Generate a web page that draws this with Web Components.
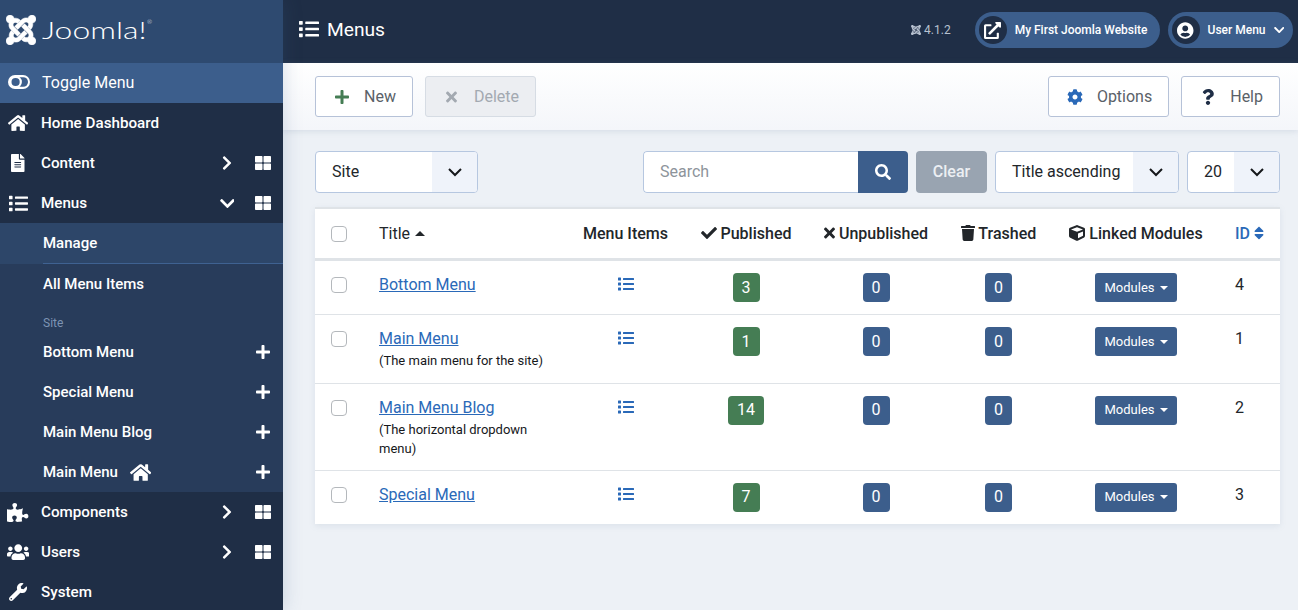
<!DOCTYPE html>
<html lang="en">
<head>
<meta charset="utf-8">
<title>Menus</title>
<style>
  html, body { margin: 0; height: 610px; overflow: hidden; background: #edf1f6; font-family: Roboto, "Liberation Sans", sans-serif; }
</style>
</head>
<body>
<admin-page></admin-page>

<script>
const ICONS = {
  list: [512, 'M80 368H16a16 16 0 0 0-16 16v64a16 16 0 0 0 16 16h64a16 16 0 0 0 16-16v-64a16 16 0 0 0-16-16zm0-320H16A16 16 0 0 0 0 64v64a16 16 0 0 0 16 16h64a16 16 0 0 0 16-16V64a16 16 0 0 0-16-16zm0 160H16a16 16 0 0 0-16 16v64a16 16 0 0 0 16 16h64a16 16 0 0 0 16-16v-64a16 16 0 0 0-16-16zm416 176H176a16 16 0 0 0-16 16v32a16 16 0 0 0 16 16h320a16 16 0 0 0 16-16v-32a16 16 0 0 0-16-16zm0-320H176a16 16 0 0 0-16 16v32a16 16 0 0 0 16 16h320a16 16 0 0 0 16-16V80a16 16 0 0 0-16-16zm0 160H176a16 16 0 0 0-16 16v32a16 16 0 0 0 16 16h320a16 16 0 0 0 16-16v-32a16 16 0 0 0-16-16z'],
  home: [576, 'M280.37 148.26L96 300.11V464a16 16 0 0 0 16 16l112.06-.29a16 16 0 0 0 15.92-16V368a16 16 0 0 1 16-16h64a16 16 0 0 1 16 16v95.64a16 16 0 0 0 16 16.05L464 480a16 16 0 0 0 16-16V300L295.67 148.26a12.19 12.19 0 0 0-15.3 0zM571.6 251.47L488 182.56V44.05a12 12 0 0 0-12-12h-56a12 12 0 0 0-12 12v72.61L318.47 43a48 48 0 0 0-61 0L4.34 251.47a12 12 0 0 0-1.6 16.9l25.5 31A12 12 0 0 0 45.15 301l235.22-193.74a12.19 12.19 0 0 1 15.3 0L530.9 301a12 12 0 0 0 16.9-1.6l25.5-31a12 12 0 0 0-1.7-16.93z'],
  file: [384, 'M224 136V0H24C10.7 0 0 10.7 0 24v464c0 13.3 10.7 24 24 24h336c13.3 0 24-10.7 24-24V160H248c-13.2 0-24-10.8-24-24zm64 236c0 6.6-5.4 12-12 12H108c-6.6 0-12-5.4-12-12v-8c0-6.6 5.4-12 12-12h168c6.6 0 12 5.4 12 12v8zm0-64c0 6.6-5.4 12-12 12H108c-6.6 0-12-5.4-12-12v-8c0-6.6 5.4-12 12-12h168c6.6 0 12 5.4 12 12v8zm0-72v8c0 6.6-5.4 12-12 12H108c-6.6 0-12-5.4-12-12v-8c0-6.6 5.4-12 12-12h168c6.6 0 12 5.4 12 12zm96-114.1v6.1H256V0h6.1c6.4 0 12.5 2.5 17 7l97.9 98c4.5 4.5 7 10.6 7 16.9z'],
  puzzle: [576, 'M519.442 288.651c-41.519 0-59.5 31.593-82.058 31.593C377.409 320.244 432 144 432 144s-196.288 80-196.288-3.297c0-35.827 36.288-46.25 36.288-85.985C272 19.216 243.885 0 210.539 0c-34.654 0-66.366 18.891-66.366 56.346 0 41.364 31.711 59.277 31.711 81.75C175.885 207.719 0 166.758 0 166.758v333.237s178.635 41.047 178.635-28.662c0-22.473-40-40.107-40-81.471 0-37.456 29.25-56.346 63.577-56.346 33.673 0 61.788 19.216 61.788 54.717 0 39.735-36.288 50.158-36.288 85.985 0 60.803 129.675 25.73 181.23 25.73 0 0-34.725-120.101 25.827-120.101 35.962 0 46.423 36.152 86.308 36.152C556.712 416 576 387.99 576 354.443c0-34.199-18.962-65.792-56.558-65.792z'],
  users: [640, 'M96 224c35.3 0 64-28.7 64-64s-28.7-64-64-64-64 28.7-64 64 28.7 64 64 64zm448 0c35.3 0 64-28.7 64-64s-28.7-64-64-64-64 28.7-64 64 28.7 64 64 64zm32 32h-64c-17.6 0-33.5 7.1-45.1 18.6 40.3 22.1 68.9 62 75.1 109.4h66c17.7 0 32-14.3 32-32v-32c0-35.3-28.7-64-64-64zm-256 0c61.9 0 112-50.1 112-112S381.9 32 320 32 208 82.1 208 144s50.1 112 112 112zm76.8 32h-8.3c-20.8 10-43.9 16-68.5 16s-47.6-6-68.5-16h-8.3C179.6 288 128 339.6 128 403.2V432c0 26.5 21.5 48 48 48h288c26.5 0 48-21.5 48-48v-28.8c0-63.6-51.6-115.2-115.2-115.2zm-223.7-13.4C161.5 263.1 145.6 256 128 256H64c-35.3 0-64 28.7-64 64v32c0 17.7 14.3 32 32 32h65.9c6.3-47.4 34.9-87.3 75.2-109.4z'],
  wrench: [512, 'M507.73 109.1c-2.24-9.03-13.54-12.09-20.12-5.51l-74.36 74.36-67.88-11.31-11.31-67.88 74.36-74.36c6.62-6.62 3.43-17.9-5.66-20.16-47.38-11.74-99.55.91-136.58 37.93-39.64 39.64-50.55 97.1-34.05 147.2L18.74 402.76c-24.99 24.99-24.99 65.51 0 90.5 24.99 24.99 65.51 24.99 90.5 0l213.21-213.21c50.12 16.71 107.47 5.68 147.37-34.22 37.07-37.07 49.7-89.32 37.91-136.73zM64 472c-13.25 0-24-10.75-24-24 0-13.26 10.75-24 24-24s24 10.74 24 24c0 13.25-10.75 24-24 24z'],
  check: [512, 'M173.898 439.404l-166.4-166.4c-9.997-9.997-9.997-26.206 0-36.204l36.203-36.204c9.997-9.998 26.207-9.998 36.204 0L192 312.69 432.095 72.596c9.997-9.997 26.207-9.997 36.204 0l36.203 36.204c9.997 9.997 9.997 26.206 0 36.204l-294.4 294.401c-9.998 9.997-26.207 9.997-36.204-.001z'],
  times: [352, 'M242.72 256l100.07-100.07c12.28-12.28 12.28-32.19 0-44.48l-22.24-22.24c-12.28-12.28-32.19-12.28-44.48 0L176 189.28 75.93 89.21c-12.28-12.28-32.19-12.28-44.48 0L9.21 111.45c-12.28 12.28-12.28 32.19 0 44.48L109.28 256 9.21 356.07c-12.28 12.28-12.28 32.19 0 44.48l22.24 22.24c12.28 12.28 32.2 12.28 44.48 0L176 322.72l100.07 100.07c12.28 12.28 32.2 12.28 44.48 0l22.24-22.24c12.28-12.28 12.28-32.19 0-44.48L242.72 256z'],
  trash: [448, 'M432 32H312l-9.4-18.7A24 24 0 0 0 281.1 0H166.8a23.72 23.72 0 0 0-21.4 13.3L136 32H16A16 16 0 0 0 0 48v32a16 16 0 0 0 16 16h416a16 16 0 0 0 16-16V48a16 16 0 0 0-16-16zM53.2 467a48 48 0 0 0 47.9 45h245.8a48 48 0 0 0 47.9-45L416 128H32z'],
  cube: [512, 'M239.1 6.3l-208 78c-18.7 7-31.1 25-31.1 45v225.1c0 18.2 10.3 34.8 26.5 42.9l208 104c13.5 6.8 29.4 6.8 42.9 0l208-104c16.3-8.1 26.5-24.8 26.5-42.9V129.3c0-20-12.4-37.9-31.1-44.9l-208-78C262 2.2 250 2.2 239.1 6.3zM256 68.4l192 72v1.1l-192 78-192-78v-1.1l192-72zm32 356V275.5l160-65v133.9l-160 80z'],
  plus: [448, 'M416 208H272V64c0-17.67-14.33-32-32-32h-32c-17.67 0-32 14.33-32 32v144H32c-17.67 0-32 14.33-32 32v32c0 17.67 14.33 32 32 32h144v144c0 17.67 14.33 32 32 32h32c17.67 0 32-14.33 32-32V304h144c17.67 0 32-14.33 32-32v-32c0-17.67-14.33-32-32-32z'],
  cog: [512, 'M487.4 315.7l-42.6-24.6c4.3-23.2 4.3-47 0-70.2l42.6-24.6c4.9-2.8 7.1-8.6 5.5-14-11.1-35.6-30-67.8-54.7-94.6-3.8-4.1-10-5.1-14.8-2.3L380.8 110c-17.9-15.4-38.5-27.3-60.8-35.1V25.8c0-5.6-3.9-10.5-9.4-11.7-36.7-8.2-74.3-7.8-109.2 0-5.5 1.2-9.4 6.1-9.4 11.7V75c-22.2 7.9-42.8 19.8-60.8 35.1L88.7 85.5c-4.9-2.8-11-1.9-14.8 2.3-24.7 26.7-43.6 58.9-54.7 94.6-1.7 5.4.6 11.2 5.5 14L67.3 221c-4.3 23.2-4.3 47 0 70.2l-42.6 24.6c-4.9 2.8-7.1 8.6-5.5 14 11.1 35.6 30 67.8 54.7 94.6 3.8 4.1 10 5.1 14.8 2.3l42.6-24.6c17.9 15.4 38.5 27.3 60.8 35.1v49.2c0 5.6 3.9 10.5 9.4 11.7 36.7 8.2 74.3 7.8 109.2 0 5.5-1.2 9.4-6.1 9.4-11.7v-49.2c22.2-7.9 42.8-19.8 60.8-35.1l42.6 24.6c4.9 2.8 11 1.9 14.8-2.3 24.7-26.7 43.6-58.9 54.7-94.6 1.5-5.5-.7-11.3-5.6-14.1zM256 336c-44.1 0-80-35.9-80-80s35.9-80 80-80 80 35.9 80 80-35.9 80-80 80z'],
  question: [384, 'M202.021 0C122.202 0 70.503 32.703 29.914 91.026c-7.363 10.58-5.093 25.086 5.178 32.874l43.138 32.709c10.373 7.865 25.132 6.026 33.253-4.148 25.049-31.381 43.63-49.449 82.757-49.449 30.764 0 68.816 19.799 68.816 49.631 0 22.552-18.617 34.134-48.993 51.164-35.423 19.86-82.299 44.576-82.299 106.405V320c0 13.255 10.745 24 24 24h72.471c13.255 0 24-10.745 24-24v-5.773c0-42.86 125.268-44.645 125.268-160.627C377.504 66.256 286.902 0 202.021 0zM192 373.459c-38.196 0-69.271 31.075-69.271 69.271 0 38.195 31.075 69.27 69.271 69.27s69.271-31.075 69.271-69.271-31.075-69.27-69.271-69.27z'],
  search: [512, 'M505 442.7L405.3 343c-4.5-4.5-10.6-7-17-7H372c27.6-35.3 44-79.7 44-128C416 93.1 322.9 0 208 0S0 93.1 0 208s93.1 208 208 208c48.3 0 92.7-16.4 128-44v16.3c0 6.4 2.5 12.5 7 17l99.7 99.7c9.4 9.4 24.6 9.4 33.9 0l28.3-28.3c9.4-9.4 9.4-24.6.1-34zM208 336c-70.7 0-128-57.2-128-128 0-70.7 57.2-128 128-128 70.7 0 128 57.2 128 128 0 70.7-57.2 128-128 128z'],
  external: [512, 'M432 320h-32a16 16 0 0 0-16 16v112H64V128h144a16 16 0 0 0 16-16V80a16 16 0 0 0-16-16H48a48 48 0 0 0-48 48v352a48 48 0 0 0 48 48h352a48 48 0 0 0 48-48V336a16 16 0 0 0-16-16zM488 0H360c-21.37 0-32.05 25.91-17 41l35.73 35.73L135 320.37a24 24 0 0 0 0 34L157.67 377a24 24 0 0 0 34 0l243.61-243.68L471 169c15 15 41 4.5 41-17V24a24 24 0 0 0-24-24z'],
  user: [496, 'M248 8C111 8 0 119 0 256s111 248 248 248 248-111 248-248S385 8 248 8zm0 96c48.6 0 88 39.4 88 88s-39.4 88-88 88-88-39.4-88-88 39.4-88 88-88zm0 344c-58.7 0-111.3-26.6-146.5-68.2 18.8-35.4 55.6-59.8 98.5-59.8 2.4 0 4.8.4 7.1 1.1 13 4.2 26.6 6.9 40.9 6.9 14.3 0 28-2.7 40.9-6.9 2.3-.7 4.7-1.1 7.1-1.1 42.9 0 79.7 24.4 98.5 59.8C359.3 421.4 306.7 448 248 448z'],
  right: [320, 'M285.476 272.971L91.132 467.314c-9.373 9.373-24.569 9.373-33.941 0l-22.667-22.667c-9.357-9.357-9.375-24.522-.04-33.901L188.505 256 34.484 101.255c-9.335-9.379-9.317-24.544.04-33.901l22.667-22.667c9.373-9.373 24.569-9.373 33.941 0L285.475 239.03c9.373 9.372 9.373 24.568.001 33.941z'],
  down: [448, 'M207.029 381.476L12.686 187.132c-9.373-9.373-9.373-24.569 0-33.941l22.667-22.667c9.357-9.357 24.522-9.375 33.901-.04L224 284.505l154.745-154.021c9.379-9.335 24.544-9.317 33.901.04l22.667 22.667c9.373 9.373 9.373 24.569 0 33.941L240.971 381.476c-9.373 9.372-24.569 9.372-33.942 0z'],
  grid: [512, 'M296 32h192c13.255 0 24 10.745 24 24v160c0 13.255-10.745 24-24 24H296c-13.255 0-24-10.745-24-24V56c0-13.255 10.745-24 24-24zm-80 0H24C10.745 32 0 42.745 0 56v160c0 13.255 10.745 24 24 24h192c13.255 0 24-10.745 24-24V56c0-13.255-10.745-24-24-24zM0 296v160c0 13.255 10.745 24 24 24h192c13.255 0 24-10.745 24-24V296c0-13.255-10.745-24-24-24H24c-13.255 0-24 10.745-24 24zm296 184h192c13.255 0 24-10.745 24-24V296c0-13.255-10.745-24-24-24H296c-13.255 0-24 10.745-24 24v160c0 13.255 10.745 24 24 24z'],
  sort: [320, 'M41 288h238c21.4 0 32.1 25.9 17 41L177 448c-9.4 9.4-24.6 9.4-33.9 0L24 329c-15.1-15.1-4.4-41 17-41zm255-105L177 64c-9.4-9.4-24.6-9.4-33.9 0L24 183c-15.1 15.1-4.4 41 17 41h238c21.4 0 32.1-25.9 17-41z']
};

const JOOMLA_ARM = 'M.6 92.1C.6 58.8 27.4 32 60.4 32c30 0 54.5 21.9 59.2 50.2 32.6-7.6 67.1.6 96.5 30l-44.3 44.3c-20.5-20.5-42.6-16.3-55.4-3.5-14.3 14.3-14.3 37.9 0 52.2l99.5 99.5-44 44.3c-87.7-87.2-49.7-49.7-99.8-99.7-26.8-26.5-35-64.8-24.8-98.9C20.4 144.6.6 120.7.6 92.1z';

class XIcon extends HTMLElement {
  connectedCallback() {
    if (this.shadowRoot) return;
    const [w, d] = ICONS[this.getAttribute('name')];
    const size = this.getAttribute('size') || 16;
    this.attachShadow({ mode: 'open' }).innerHTML = `
      <style>:host{display:inline-flex;align-items:center;justify-content:center;flex:none}svg{display:block;fill:currentColor}</style>
      <svg viewBox="0 0 ${w} 512" height="${size}" width="${size * w / 512}"><path d="${d}"/></svg>`;
  }
}

class JoomlaMark extends HTMLElement {
  connectedCallback() {
    if (this.shadowRoot) return;
    const size = this.getAttribute('size') || 32;
    const arms = [0, 90, 180, 270].map(a => `<path transform="rotate(${a} 224 256)" d="${JOOMLA_ARM}"/>`).join('');
    this.attachShadow({ mode: 'open' }).innerHTML = `
      <style>:host{display:inline-flex;flex:none}svg{display:block;fill:currentColor;stroke:currentColor;stroke-width:8}</style>
      <svg viewBox="0 32 448 448" width="${size}" height="${size}">${arms}</svg>`;
  }
}

class SideItem extends HTMLElement {
  connectedCallback() {
    if (this.shadowRoot) return;
    const icon = this.getAttribute('icon');
    const size = this.getAttribute('icon-size') || 18;
    const arrow = this.getAttribute('arrow');
    const dash = this.hasAttribute('dash');
    this.attachShadow({ mode: 'open' }).innerHTML = `
      <style>
        :host{display:flex;align-items:center;height:40px;color:#fff;font-size:15.2px;font-weight:500}
        .ico{width:41px;display:flex;justify-content:center;padding-right:5px;box-sizing:border-box;flex:none}
        .label{flex:1;white-space:nowrap}
        .arrow{width:20px;display:flex;justify-content:center;margin-right:18px}
        .dash{margin-right:12px;display:flex}
      </style>
      <span class="ico"><x-icon name="${icon}" size="${size}"></x-icon></span>
      <span class="label"><slot></slot></span>
      ${arrow ? `<span class="arrow"><x-icon name="${arrow}" size="${arrow === 'down' ? 17 : 16}"></x-icon></span>` : ''}
      ${dash ? `<span class="dash"><x-icon name="grid" size="16"></x-icon></span>` : ''}`;
  }
}

class SubItem extends HTMLElement {
  connectedCallback() {
    if (this.shadowRoot) return;
    const plus = this.hasAttribute('plus');
    this.attachShadow({ mode: 'open' }).innerHTML = `
      <style>
        :host{display:flex;align-items:center;height:40px;padding-left:43px;color:#fff;font-size:15px;font-weight:500}
        .label{flex:1;display:flex;align-items:center;gap:12px;white-space:nowrap}
        .plus{margin-right:13px;display:flex}
      </style>
      <span class="label"><slot></slot></span>
      ${plus ? `<span class="plus"><x-icon name="plus" size="16"></x-icon></span>` : ''}`;
  }
}

class AppSidebar extends HTMLElement {
  constructor() {
    super();
    this.attachShadow({ mode: 'open' }).innerHTML = `
      <style>
        :host{display:block;width:283px;flex:none;background:#1f2e46;height:610px;overflow:hidden;color:#fff}
        .brand{height:63px;background:#2e4a70;display:flex;align-items:center;padding:0 0 3px 6px;gap:6px;box-sizing:border-box}
        .word{font-family:Lato,Roboto,sans-serif;font-weight:300;font-size:24px;line-height:1;display:inline-block;transform:scaleX(1.33);transform-origin:left center;position:relative}
        .word sup{position:absolute;left:100%;top:1px;font-size:6px;transform:scaleX(.75);transform-origin:left top}
        .toggle{height:40px;background:#3c5e8c;display:flex;align-items:center;padding:0 0 2px 8px;box-sizing:border-box;font-size:16px;gap:12px}
        .toggle svg{display:block}
        .sub{background:#283c5b}
        .manage{position:relative;background:#2d4669;height:41px;box-sizing:border-box;padding-bottom:1px}
        .manage::after{content:"";position:absolute;left:43px;right:0;bottom:0;height:1px;background:#3f6292}
        .site{font-size:12px;color:#7d94b4;padding:12px 0 0 43px;height:16px}
      </style>
      <div class="brand"><joomla-mark size="30"></joomla-mark><span class="word">Joomla!<sup>®</sup></span></div>
      <div class="toggle">
        <svg width="22" height="14" viewBox="0 0 22 14"><rect width="22" height="14" rx="7" fill="#fff"/><rect x="2" y="2.2" width="18" height="9.6" rx="4.8" fill="#3c5e8c"/><circle cx="7.6" cy="7" r="5.2" fill="#3c5e8c" stroke="#fff" stroke-width="2.2"/></svg>
        <span>Toggle Menu</span>
      </div>
      <side-item icon="home" icon-size="18">Home Dashboard</side-item>
      <side-item icon="file" icon-size="18" arrow="right" dash>Content</side-item>
      <side-item icon="list" icon-size="19" arrow="down" dash>Menus</side-item>
      <div class="sub">
        <sub-item class="manage">Manage</sub-item>
        <sub-item>All Menu Items</sub-item>
        <div class="site">Site</div>
        <sub-item plus>Bottom Menu</sub-item>
        <sub-item plus>Special Menu</sub-item>
        <sub-item plus>Main Menu Blog</sub-item>
        <sub-item plus>Main Menu <x-icon name="home" size="19"></x-icon></sub-item>
      </div>
      <side-item icon="puzzle" icon-size="19" arrow="right" dash>Components</side-item>
      <side-item icon="users" icon-size="18" arrow="right" dash>Users</side-item>
      <side-item icon="wrench" icon-size="18">System</side-item>`;
  }
}

class PillLink extends HTMLElement {
  connectedCallback() {
    if (this.shadowRoot) return;
    const caret = this.hasAttribute('caret');
    this.attachShadow({ mode: 'open' }).innerHTML = `
      <style>
        :host{display:flex;align-items:center;height:36px;border-radius:18px;background:#3c5e8c;color:#fff;font-size:12px;font-weight:500;padding:0 ${caret ? 9 : 12}px 0 4px;gap:8px;white-space:nowrap}
        .disc{width:28px;height:28px;border-radius:50%;background:#1f2e46;display:flex;align-items:center;justify-content:center}
      </style>
      <span class="disc"><x-icon name="${this.getAttribute('icon')}" size="${this.getAttribute('icon-size') || 18}"></x-icon></span>
      <slot></slot>
      ${caret ? `<x-icon name="down" size="12"></x-icon>` : ''}`;
  }
}

class TopBar extends HTMLElement {
  constructor() {
    super();
    this.attachShadow({ mode: 'open' }).innerHTML = `
      <style>
        :host{display:flex;align-items:center;height:63px;box-sizing:border-box;background:#1f2e46;color:#fff;padding:0 5px 3px 16px;gap:8px}
        h1{margin:0 0 2px;font-size:19.2px;font-weight:400;flex:1}
        .mark{margin-bottom:2px}
        .ver{display:flex;align-items:center;gap:3px;color:#b8c2d0;font-size:12px;margin-right:16px}
        .ver joomla-mark{color:#b8c2d0}
      </style>
      <x-icon class="mark" name="list" size="20"></x-icon>
      <h1>Menus</h1>
      <span class="ver"><joomla-mark size="10"></joomla-mark>4.1.2</span>
      <pill-link icon="external" icon-size="17">My First Joomla Website</pill-link>
      <pill-link icon="user" icon-size="17" caret>User Menu</pill-link>`;
  }
}

class ToolButton extends HTMLElement {
  connectedCallback() {
    if (this.shadowRoot) return;
    const disabled = this.hasAttribute('disabled');
    this.attachShadow({ mode: 'open' }).innerHTML = `
      <style>
        :host{display:flex;align-items:center;height:41px;box-sizing:border-box;border:1px solid ${disabled ? '#d6dce4' : '#b6c2d8'};border-radius:3px;background:${disabled ? '#eceef2' : '#fff'};color:${disabled ? '#a3a9b1' : '#5a6168'};font-size:16px;padding:0 16px}
        .ico{width:20px;display:flex;justify-content:center;margin-right:12px;color:${this.getAttribute('tone') || 'inherit'}}
      </style>
      <span class="ico"><x-icon name="${this.getAttribute('icon')}" size="16"></x-icon></span><slot></slot>`;
  }
}

class ToolBar extends HTMLElement {
  constructor() {
    super();
    this.attachShadow({ mode: 'open' }).innerHTML = `
      <style>
        :host{display:flex;align-items:center;height:67px;box-sizing:border-box;padding:0 18px 0 32px;gap:12px;background:linear-gradient(#fff,#f4f6fa);box-shadow:0 1px 6px rgba(120,140,170,.22);position:relative}
        .gap{flex:1}
      </style>
      <tool-button icon="plus" tone="#457d54">New</tool-button>
      <tool-button icon="times" disabled>Delete</tool-button>
      <span class="gap"></span>
      <tool-button icon="cog" tone="#2a69b8">Options</tool-button>
      <tool-button icon="question" tone="#1f2e46">Help</tool-button>`;
  }
}

class FakeSelect extends HTMLElement {
  connectedCallback() {
    if (this.shadowRoot) return;
    this.attachShadow({ mode: 'open' }).innerHTML = `
      <style>
        :host{display:flex;height:42px;box-sizing:border-box;border:1px solid #b6c7e0;border-radius:4px;background:#fff;color:#22262a;font-size:16px;overflow:hidden;width:${this.getAttribute('w')}px;flex:none}
        .val{flex:1;padding:0 0 2px 16px;display:flex;align-items:center;white-space:nowrap}
        .arr{width:45px;background:#eff3fa;display:flex;align-items:center;justify-content:center}
      </style>
      <span class="val"><slot></slot></span>
      <span class="arr"><svg width="16" height="10" viewBox="0 0 16 10"><path d="M2 2l6 6 6-6" fill="none" stroke="#16181b" stroke-width="2"/></svg></span>`;
  }
}

class FilterBar extends HTMLElement {
  constructor() {
    super();
    this.attachShadow({ mode: 'open' }).innerHTML = `
      <style>
        :host{display:flex;align-items:center;padding-top:21px;font-size:16px}
        .search{display:flex;height:42px;width:265px;margin-left:auto;border-radius:4px;overflow:hidden;flex:none;box-sizing:border-box}
        .field{flex:1;box-sizing:border-box;border:1px solid #b6c7e0;border-right:0;border-radius:4px 0 0 4px;background:#fff;color:#8d949b;display:flex;align-items:center;padding:0 0 2px 16px}
        .go{width:50px;background:#3c5e8c;color:#fff;display:flex;align-items:center;justify-content:center}
        .clear{width:71px;height:42px;box-sizing:border-box;padding-bottom:2px;background:#99a4b1;color:#eceff3;border-radius:4px;display:flex;align-items:center;justify-content:center;margin:0 8px;font-weight:500}
        fake-select + fake-select{margin-left:8px}
      </style>
      <fake-select w="163">Site</fake-select>
      <div class="search"><span class="field">Search</span><span class="go"><x-icon name="search" size="16"></x-icon></span></div>
      <span class="clear">Clear</span>
      <fake-select w="184">Title ascending</fake-select>
      <fake-select w="93">20</fake-select>`;
  }
}

class CountBadge extends HTMLElement {
  connectedCallback() {
    if (this.shadowRoot) return;
    const tone = this.hasAttribute('green') ? '#457d54' : '#3c5e8c';
    this.attachShadow({ mode: 'open' }).innerHTML = `
      <style>
        :host{display:inline-flex;align-items:center;justify-content:center;height:29px;min-width:27px;padding:0 9px;box-sizing:border-box;border-radius:4px;background:${tone};color:#fff;font-size:16px}
      </style><slot></slot>`;
  }
}

class ModulesButton extends HTMLElement {
  constructor() {
    super();
    this.attachShadow({ mode: 'open' }).innerHTML = `
      <style>
        :host{display:inline-flex;align-items:center;height:29px;padding:0 0 0 9.5px;box-sizing:border-box;border-radius:3px;background:#3c5e8c;color:#fff;font-size:13px;gap:5px;width:82px}
        i{width:0;height:0;border:4px solid transparent;border-top-color:#fff;border-bottom:0}
      </style>Modules<i></i>`;
  }
}

const ROWS = [
  { title: 'Bottom Menu', pub: 3, id: 4 },
  { title: 'Main Menu', note: '(The main menu for the site)', pub: 1, id: 1 },
  { title: 'Main Menu Blog', note: '(The horizontal dropdown menu)', pub: 14, id: 2, wrap: true },
  { title: 'Special Menu', pub: 7, id: 3 }
];

class MenusTable extends HTMLElement {
  constructor() {
    super();
    const rows = ROWS.map(r => `
      <tr>
        <td class="c"><span class="box"></span></td>
        <td><a>${r.title}</a>${r.note ? `<div class="note${r.wrap ? ' wrap' : ''}">${r.note}</div>` : ''}</td>
        <td class="mid ln"><x-icon name="list" size="16"></x-icon></td>
        <td class="mid"><count-badge green>${r.pub}</count-badge></td>
        <td class="mid"><count-badge>0</count-badge></td>
        <td class="mid"><count-badge>0</count-badge></td>
        <td class="mid"><modules-button></modules-button></td>
        <td class="idv">${r.id}</td>
      </tr>`).join('');
    this.attachShadow({ mode: 'open' }).innerHTML = `
      <style>
        :host{display:block;margin-top:14px;background:#fff;box-shadow:0 2px 6px rgba(120,140,170,.15);color:#22262a}
        table{width:965px;border-collapse:collapse;table-layout:fixed;font-size:16px}
        th{font-weight:500;height:49px;padding:0;border-top:2px solid #dfe3e7;border-bottom:3px solid #dfe3e7;text-align:center;white-space:nowrap}
        th.l{text-align:left;padding-left:16px;font-weight:400}
        th x-icon{vertical-align:-2px}
        td{padding:12px 16px;vertical-align:top;line-height:24px;border-bottom:1px solid #dfe3e7}
        tr:last-child td{border-bottom:0}
        .mid{text-align:center;padding-left:0;padding-right:0}
        .ln{color:#2a69b8;padding-top:14px}
        .c,th.c{padding-left:16px;padding-right:0;text-align:left}
        .box{display:block;width:16px;height:16px;box-sizing:border-box;border:1px solid #b4b8bc;border-radius:4px;margin-top:4px;background:#fff}
        a{color:#2a69b8;text-decoration:underline}
        .note{font-size:13px;line-height:19.5px;color:#16181b}
        .note.wrap{margin-bottom:-1px}
        .idv{color:#22262a}
        .asc{display:inline-block;width:0;height:0;border:5px solid transparent;border-bottom-color:#22262a;border-top:0;vertical-align:3px;margin-left:1px}
        .idh{color:#2a69b8;text-align:left;padding-left:16px}
      </style>
      <table>
        <colgroup><col style="width:48px"><col style="width:204px"><col style="width:117px"><col style="width:124px"><col style="width:136px"><col style="width:109px"><col style="width:166px"><col style="width:61px"></colgroup>
        <thead><tr>
          <th class="c"><span class="box" style="margin:0"></span></th>
          <th class="l">Title <i class="asc"></i></th>
          <th>Menu Items</th>
          <th><x-icon name="check" size="16"></x-icon> Published</th>
          <th><x-icon name="times" size="16"></x-icon> Unpublished</th>
          <th><x-icon name="trash" size="16"></x-icon> Trashed</th>
          <th><x-icon name="cube" size="16"></x-icon> Linked Modules</th>
          <th class="idh">ID <x-icon name="sort" size="16"></x-icon></th>
        </tr></thead>
        <tbody>${rows}</tbody>
      </table>`;
  }
}

class AdminPage extends HTMLElement {
  constructor() {
    super();
    this.attachShadow({ mode: 'open' }).innerHTML = `
      <style>
        :host{display:flex;width:1298px;height:610px;overflow:hidden;font-family:Roboto,"Liberation Sans",sans-serif}
        app-sidebar{position:relative;z-index:2;box-shadow:0 0 18px rgba(60,94,140,.22)}
        .main{flex:1;min-width:0;display:flex;flex-direction:column}
        .body{padding:0 18px 0 32px}
      </style>
      <app-sidebar></app-sidebar>
      <div class="main">
        <top-bar></top-bar>
        <tool-bar></tool-bar>
        <div class="body">
          <filter-bar></filter-bar>
          <menus-table></menus-table>
        </div>
      </div>`;
  }
}

customElements.define('x-icon', XIcon);
customElements.define('joomla-mark', JoomlaMark);
customElements.define('side-item', SideItem);
customElements.define('sub-item', SubItem);
customElements.define('app-sidebar', AppSidebar);
customElements.define('pill-link', PillLink);
customElements.define('top-bar', TopBar);
customElements.define('tool-button', ToolButton);
customElements.define('tool-bar', ToolBar);
customElements.define('fake-select', FakeSelect);
customElements.define('filter-bar', FilterBar);
customElements.define('count-badge', CountBadge);
customElements.define('modules-button', ModulesButton);
customElements.define('menus-table', MenusTable);
customElements.define('admin-page', AdminPage);
</script>
</body>
</html>
